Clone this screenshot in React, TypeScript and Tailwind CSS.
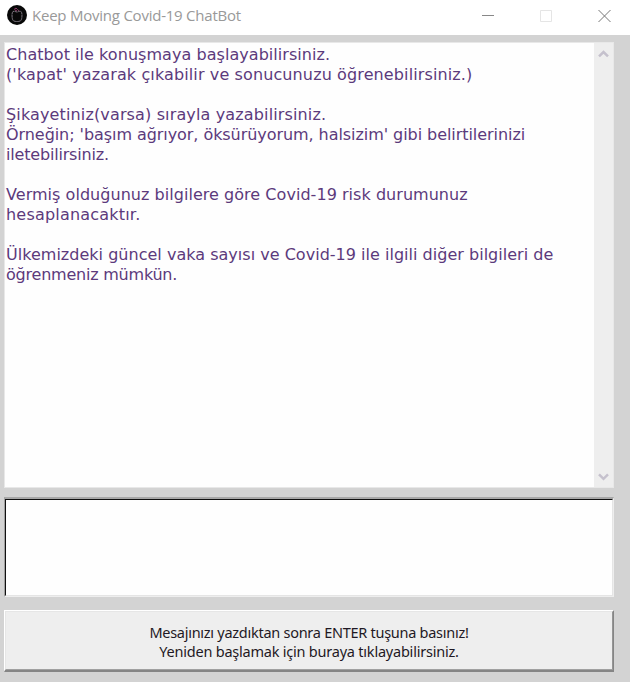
const messages: { text: string; fit: string }[] = [
  { text: "Chatbot ile konuşmaya başlayabilirsiniz.", fit: "tracking-[0.05px]" },
  { text: "('kapat' yazarak çıkabilir ve sonucunuzu öğrenebilirsiniz.)", fit: "tracking-[0.12px]" },
  { text: "", fit: "" },
  { text: "Şikayetiniz(varsa) sırayla yazabilirsiniz.", fit: "tracking-[0.14px]" },
  { text: "Örneğin; 'başım ağrıyor, öksürüyorum, halsizim' gibi belirtilerinizi", fit: "tracking-[-0.06px]" },
  { text: "iletebilirsiniz.", fit: "tracking-[-0.18px]" },
  { text: "", fit: "" },
  { text: "Vermiş olduğunuz bilgilere göre Covid-19 risk durumunuz", fit: "tracking-[0.04px]" },
  { text: "hesaplanacaktır.", fit: "tracking-[0.2px]" },
  { text: "", fit: "" },
  { text: "Ülkemizdeki güncel vaka sayısı ve Covid-19 ile ilgili diğer bilgileri de", fit: "tracking-[0.02px]" },
  { text: "öğrenmeniz mümkün.", fit: "tracking-[-0.22px]" },
];

function AppIcon() {
  return (
    <svg className="size-5" viewBox="0 0 20 20" fill="none">
      <circle cx="10" cy="10" r="10" fill="#080808" />
      <path d="M6 6.5C4.5 8 4.7 14 6.3 15.7C8 16.8 12 16.8 13.7 15.7C15.3 14 15.5 8 14 6.5C12 5.7 11 7.2 10 7C9 7.2 8 5.7 6 6.5Z" stroke="#8a838d" strokeWidth=".9" strokeDasharray="3 .4" />
      <path d="M7 4.5L9 3L10.5 4.5L12 5.8M10 6L8 5" stroke="#8d3d68" strokeWidth="1" />
    </svg>
  );
}

function TitleBar() {
  return (
    <header className="flex h-[35px] items-center bg-white pl-[7px] pb-[5px]">
      <AppIcon />
      <h1 className="ml-[5px] whitespace-nowrap text-[15px] leading-5 tracking-[-0.23px] text-[#999]">Keep Moving Covid-19 ChatBot</h1>
      <div className="ml-auto flex items-center gap-[46px] pt-[2px] pr-5">
        <svg className="h-3 w-3" viewBox="0 0 12 12"><path d="M0 5.5H12" stroke="#888" /></svg>
        <svg className="size-3" viewBox="0 0 12 12"><path d="M.5.5H11.5V11.5H.5Z" fill="none" stroke="#e5e5e5" /></svg>
        <svg className="-mr-px h-3 w-[13px]" viewBox="0 0 13 12"><path d="M.5 0L12.5 12M12.5 0L.5 12" stroke="#777" strokeWidth="1" /></svg>
      </div>
    </header>
  );
}

function ScrollBar() {
  return (
    <div className="flex w-[19px] flex-col items-center justify-between bg-[#eee] pt-[7px] pr-px pb-[6px]">
      <svg className="h-[8px] w-[11px]" viewBox="0 0 11 8"><path d="M1 6.4L5.5 2L10 6.4" fill="none" stroke="#c5c1cd" strokeWidth="2.5" /></svg>
      <svg className="h-[8px] w-[11px]" viewBox="0 0 11 8"><path d="M1 1.4L5.5 5.8L10 1.4" fill="none" stroke="#c5c1cd" strokeWidth="2.5" /></svg>
    </div>
  );
}

export default function App() {
  return (
    <div className="flex h-[682px] w-[630px] flex-col overflow-hidden bg-[#d3d3d3] font-['Open_Sans','Noto_Sans',sans-serif]">
      <TitleBar />
      <main className="flex flex-col pt-[7px] pr-4 pl-1">
        <section className="flex h-[446px] border border-[#e8e8e8] bg-[#fefefe]">
          <div className="flex-1 pt-[2px] pl-px font-['DejaVu_Sans',sans-serif] text-[16px] leading-5 text-[#5c3a7c]">
            {messages.map((line, i) => (
              <p key={i} className="h-5 whitespace-nowrap"><span className={line.fit}>{line.text}</span></p>
            ))}
          </div>
          <ScrollBar />
        </section>
        <div className="mt-[9px] h-[100px] border border-t-2 border-t-[#a8a8a8] border-r-[#eee] border-b-[#eee] border-l-[#a0a0a0]">
          <textarea className="block h-full w-full resize-none border border-t-[#111] border-r-[#e5e5e5] border-b-[#e5e5e5] border-l-[#111] bg-[#fefefe] outline-none" />
        </div>
        <button className="mt-[13px] h-[62px] border border-t-white border-r-[#858585] border-b-2 border-b-[#858585] border-l-white bg-[#eee] text-center font-['Noto_Sans',sans-serif] text-[14.5px] leading-[19px] text-[#1f1924]">
          <span className="flex h-full flex-col justify-center border border-t-[#e6e6e6] border-r-[#959595] border-b-[#a0a0a0] border-l-[#e6e6e6] pt-[2px]">
            <span className="tracking-[-0.27px]">Mesajınızı yazdıktan sonra ENTER tuşuna basınız!</span>
            <span className="tracking-[-0.22px]">Yeniden başlamak için buraya tıklayabilirsiniz.</span>
          </span>
        </button>
      </main>
    </div>
  );
}
